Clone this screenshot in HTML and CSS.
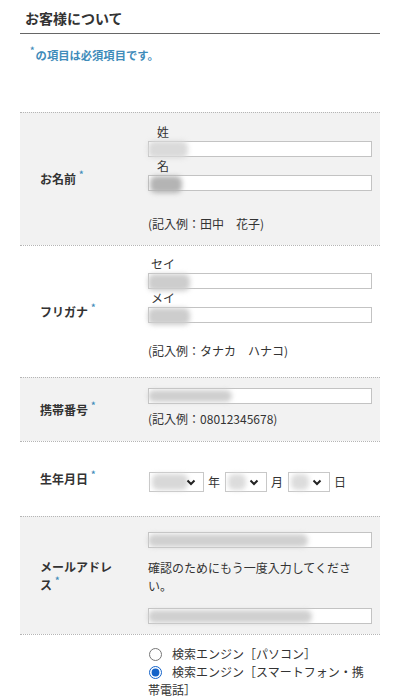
FILE: index.html
```html
<!DOCTYPE html>
<html lang="ja">
<head>
<meta charset="utf-8">
<title>お客様について</title>
<link rel="stylesheet" href="styles.css">
</head>
<body>
<div class="page">
  <h2 class="title">お客様について</h2>
  <p class="note"><span class="req">*</span>の項目は必須項目です。</p>

  <div class="form">
    <div class="row gray r-name">
      <div class="label">お名前<span class="req">*</span></div>
      <div class="value">
        <div class="sub">姓</div>
        <div class="field"><input type="text"><span class="blur b-sei"></span></div>
        <div class="sub">名</div>
        <div class="field"><input type="text"><span class="blur b-mei"></span></div>
        <div class="example ex-name">(記入例：田中　花子)</div>
      </div>
    </div>

    <div class="row r-kana">
      <div class="label">フリガナ<span class="req">*</span></div>
      <div class="value">
        <div class="sub">セイ</div>
        <div class="field"><input type="text"><span class="blur b-kana"></span></div>
        <div class="sub">メイ</div>
        <div class="field"><input type="text"><span class="blur b-kana"></span></div>
        <div class="example ex-kana">(記入例：タナカ　ハナコ)</div>
      </div>
    </div>

    <div class="row gray r-tel">
      <div class="label">携帯番号<span class="req">*</span></div>
      <div class="value">
        <div class="field"><input type="text"><span class="blur b-tel"></span></div>
        <div class="example ex-tel">(記入例：08012345678)</div>
      </div>
    </div>

    <div class="row r-birth">
      <div class="label">生年月日<span class="req">*</span></div>
      <div class="value">
        <div class="dates">
          <span class="sel s-year"><select><option></option></select><span class="blur b-year"></span><svg class="chev" viewBox="0 0 10 7" width="10" height="7"><path d="M1.5 1.5 L5 5 L8.5 1.5" fill="none" stroke="#222" stroke-width="2"/></svg></span>
          <span class="unit">年</span>
          <span class="sel s-md"><select><option></option></select><span class="blur b-md"></span><svg class="chev" viewBox="0 0 10 7" width="10" height="7"><path d="M1.5 1.5 L5 5 L8.5 1.5" fill="none" stroke="#222" stroke-width="2"/></svg></span>
          <span class="unit">月</span>
          <span class="sel s-md"><select><option></option></select><span class="blur b-md"></span><svg class="chev" viewBox="0 0 10 7" width="10" height="7"><path d="M1.5 1.5 L5 5 L8.5 1.5" fill="none" stroke="#222" stroke-width="2"/></svg></span>
          <span class="unit">日</span>
        </div>
      </div>
    </div>

    <div class="row gray r-mail">
      <div class="label">メールアドレス<span class="req">*</span></div>
      <div class="value">
        <div class="field"><input type="text"><span class="blur b-mail1"></span></div>
        <div class="confirm">確認のためにもう一度入力してください。</div>
        <div class="field"><input type="text"><span class="blur b-mail2"></span></div>
      </div>
    </div>

    <div class="row r-source">
      <div class="label"></div>
      <div class="value radios">
        <label class="opt"><input type="radio" name="src">検索エンジン［パソコン］</label>
        <label class="opt"><input type="radio" name="src" checked>検索エンジン［スマートフォン・携帯電話］</label>
        <label class="opt"><input type="radio" name="src">その他のウェブサイト</label>
        <label class="opt"><input type="radio" name="src">知人の紹介</label>
      </div>
    </div>
  </div>
</div>
</body>
</html>
```
FILE: styles.css
```css
html, body {
  margin: 0;
  padding: 0;
  background: #fff;
}
body {
  font-family: "Noto Sans CJK JP", "Noto Sans", sans-serif;
  color: #333;
  font-size: 12px;
  line-height: 18px;
}
.page {
  padding: 0 20px;
}
.title {
  margin: 0;
  padding: 8px 0 5px 5px;
  font-size: 14px;
  line-height: 20px;
  font-weight: 700;
  color: #333;
  border-bottom: 1px solid #666;
}
.note {
  margin: 12px 0 0;
  padding-left: 10px;
  font-size: 11.3px;
  line-height: 18px;
  font-weight: 700;
  color: #3f8cba;
  height: 18px;
}
.note .req {
  margin-left: 0;
  margin-right: 1px;
}
.req {
  color: #3f8cba;
  font-size: 9px;
  vertical-align: 6px;
  line-height: 0;
  margin-left: 3px;
  font-weight: 700;
}
.form {
  margin-top: 48px;
}
.row {
  display: grid;
  grid-template-columns: 128px 1fr;
  border-top: 1px dotted #b5b5b5;
}
.row.gray {
  background: #f2f2f2;
}
.label {
  align-self: center;
  padding: 0 30px 0 20px;
  font-weight: 700;
  color: #333;
}
.value {
  padding-right: 8px;
}
.sub {
  width: 30px;
  text-align: center;
  height: 18px;
}
.field {
  position: relative;
  height: 16px;
}
.field input {
  display: block;
  box-sizing: border-box;
  width: 100%;
  height: 16px;
  margin: 0;
  padding: 0 4px;
  border: 1px solid #c3c3c3;
  background: #fff;
  font: inherit;
}
.blur {
  position: absolute;
  left: 0;
  top: 0;
  height: 17px;
  border-radius: 6px;
  background: #d4d4d4;
  filter: blur(2.5px);
}
.b-sei { width: 40px; background: #dadada; top: 0; }
.b-mei { width: 32px; background: #b4b4b4; top: 1px; left: 2px; }
.b-kana { width: 42px; background: #cdcdcd; top: 1px; }
.b-tel { width: 84px; height: 12px; top: 2px; background: #cfcfcf; }
.b-mail1 { width: 160px; height: 13px; top: 2px; background: #d0d0d0; }
.b-mail2 { width: 164px; height: 13px; top: 2px; background: #d0d0d0; }

.r-name .value { padding-top: 10px; padding-bottom: 12px; }
.ex-name { margin-top: 24px; }
.r-kana .value { padding-top: 9px; padding-bottom: 17px; }
.ex-kana { margin-top: 19px; }
.r-tel .value { padding-top: 10px; padding-bottom: 13px; }
.ex-tel { margin-top: 6px; }
.r-birth .value { padding-top: 30px; padding-bottom: 24px; }
.r-mail .value { padding-top: 15px; padding-bottom: 10px; }
.confirm { margin-top: 11px; margin-bottom: 13px; }
.r-source .value { padding-top: 10px; }

.dates {
  display: flex;
  align-items: center;
  height: 20px;
  padding-left: 1px;
}
.sel {
  position: relative;
  display: block;
  height: 20px;
}
.sel select {
  appearance: none;
  -webkit-appearance: none;
  display: block;
  box-sizing: border-box;
  height: 20px;
  width: 100%;
  margin: 0;
  border: 1px solid #c8c8c8;
  border-radius: 0;
  background: #fff;
  font: inherit;
}
.s-year { width: 55px; }
.s-md { width: 42px; }
.chev {
  position: absolute;
  right: 8px;
  top: 7px;
}
.b-year { left: 3px; top: 2px; width: 36px; height: 16px; background: #d8d8d8; }
.b-md { left: 3px; top: 2px; width: 18px; height: 16px; background: #dcdcdc; }
.unit {
  margin: 0 5px 0 4px;
}
.radios .opt {
  display: block;
}
.opt input {
  width: 13px;
  height: 13px;
  margin: 0 10px 0 1px;
  vertical-align: -2px;
  accent-color: #1463c9;
}
```
